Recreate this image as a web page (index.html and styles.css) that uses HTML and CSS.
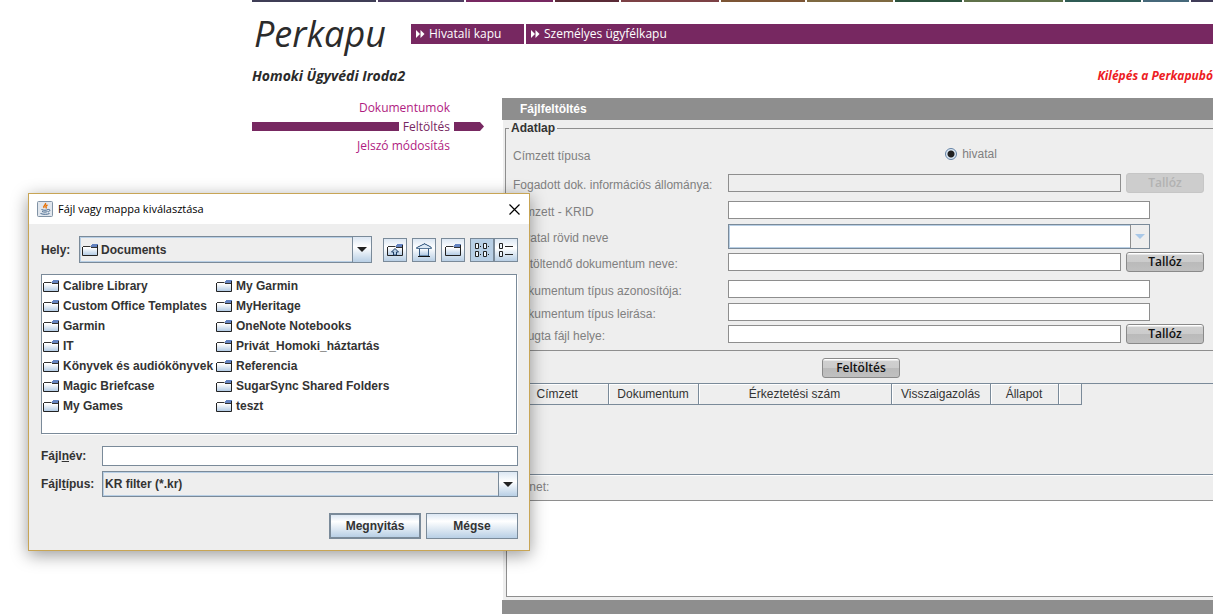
FILE: index.html
```
<!DOCTYPE html>
<html lang="hu">
<head>
    <meta charset="utf-8">
    <title>Perkapu</title>
    <link rel="stylesheet" href="styles.css">
</head>
<body>
<svg class="defs" width="0" height="0">
    <defs>
        <linearGradient id="paper" x1="0" y1="0" x2="0" y2="1">
            <stop offset="0.1" stop-color="#ffffff"/>
            <stop offset="1" stop-color="#a9c5e2"/>
        </linearGradient>
    </defs>
    <symbol id="folder" viewBox="0 0 16 14">
        <path d="M1 4h14v9h-14z" fill="url(#paper)"/>
        <path d="M0.500 4v8.500h15V1.500" fill="none" stroke="#222"/>
        <path d="M1 3.500h7.500M9 4.500h6" fill="none" stroke="#333"/>
        <path d="M10 1h6v1h-6zM9 2h6v2h-6z" fill="#6382bf"/>
    </symbol>
</svg>

<div class="page">
    <div class="strip">
        <i class="c1"></i><i class="c2"></i><i class="c3"></i><i class="c4"></i><i class="c5"></i><i class="c6"></i>
        <i class="c7"></i><i class="c8"></i><i class="c9"></i><i class="c10"></i><i class="c11"></i><i class="c12"></i>
    </div>

    <div class="header">
        <h1>Perkapu</h1>
        <div class="topnav">
            <a href="#"><svg width="9" height="8" viewBox="0 0 9 8"><path d="M0 0l4 4-4 4zM4.500 0l4 4-4 4z" fill="#fff"/></svg>Hivatali kapu</a>
            <a href="#" class="wide"><svg width="9" height="8" viewBox="0 0 9 8"><path d="M0 0l4 4-4 4zM4.500 0l4 4-4 4z" fill="#fff"/></svg>Személyes ügyfélkapu</a>
        </div>
    </div>

    <div class="userline">
        <span class="user">Homoki Ügyvédi Iroda2</span>
        <a href="#" class="logout">Kilépés a Perkapubó</a>
    </div>

    <div class="main">
        <div class="menu">
            <div class="item"><a href="#">Dokumentumok</a></div>
            <div class="item active">
                <span class="bar"></span>
                <a href="#">Feltöltés</a>
                <svg width="30" height="9" viewBox="0 0 30 9"><path d="M0 0h26l4 4.500-4 4.500H0z" fill="#772861"/></svg>
            </div>
            <div class="item"><a href="#">Jelszó módosítás</a></div>
        </div>

        <div class="content">
            <h2>Fájlfeltöltés</h2>
            <div class="applet">
                <fieldset>
                    <legend>Adatlap</legend>
                    <div class="form">
                        <span>Címzett típusa</span>
                        <label class="radio"><input type="radio" name="tipus" checked>hivatal</label>

                        <label for="info">Fogadott dok. információs állománya:</label>
                        <input type="text" id="info" class="short" disabled>
                        <button class="browse" disabled>Tallóz</button>

                        <label for="krid">Címzett - KRID</label>
                        <input type="text" id="krid" class="long">

                        <label for="hivatal">Hivatal rövid neve</label>
                        <div class="combo pale long">
                            <select id="hivatal"><option></option></select>
                            <span class="arrow"><svg width="10" height="5" viewBox="0 0 10 5"><path d="M0 0h10L5 5z" fill="#a9c8e8"/></svg></span>
                        </div>

                        <label for="doknev">Feltöltendő dokumentum neve:</label>
                        <input type="text" id="doknev" class="short">
                        <button class="browse">Tallóz</button>

                        <label for="azon">Dokumentum típus azonosítója:</label>
                        <input type="text" id="azon" class="long">

                        <label for="leiras">Dokumentum típus leirása:</label>
                        <input type="text" id="leiras" class="long">

                        <label for="nyugta">Nyugta fájl helye:</label>
                        <input type="text" id="nyugta" class="short">
                        <button class="browse">Tallóz</button>
                    </div>
                </fieldset>

                <div class="send"><button class="browse">Feltöltés</button></div>

                <div class="tablebox">
                    <table>
                        <tr>
                            <th class="w1">Címzett</th>
                            <th class="w2">Dokumentum</th>
                            <th class="w3">Érkeztetési szám</th>
                            <th class="w4">Visszaigazolás</th>
                            <th class="w5">Állapot</th>
                            <th class="w6"></th>
                        </tr>
                    </table>
                </div>

                <label class="msglabel" for="uzenet">Üzenet:</label>
                <textarea id="uzenet"></textarea>
            </div>
            <div class="foot"></div>
        </div>
    </div>
</div>

<!-- file chooser -->
<div class="dialog">
    <div class="titlebar">
        <svg width="16" height="16" viewBox="0 0 16 16">
            <rect x="0.500" y="0.500" width="15" height="15" rx="1" fill="#e0e6ed" stroke="#8193a5"/>
            <path d="M8.500 2c1 2-3 2.500-1.500 5M10.500 4c-2 1-2 1.500-1 3.500" fill="none" stroke="#e76f00" stroke-width="1.400"/>
            <path d="M4.500 8.500c2 1 5 1 6.500 0M5 10.500c2 .8 4 .8 5.500 0M3.500 12.500c3 1.200 7 1 9 0M11 8.500c3-.5 2 2 0 2.500" fill="none" stroke="#4a6b8f"/>
        </svg>
        <span class="caption">Fájl vagy mappa kiválasztása</span>
        <button class="close" aria-label="Bezárás"><svg width="11" height="11" viewBox="0 0 11 11"><path d="M0.500 0.500l10 10M10.500 0.500l-10 10" stroke="#000" stroke-width="1.200"/></svg></button>
    </div>

    <div class="lookin">
        <label for="hely">Hely:</label>
        <div class="combo">
            <svg class="icon" width="16" height="14"><use href="#folder"/></svg>
            <select id="hely"><option>Documents</option></select>
            <span class="arrow"><svg width="10" height="5" viewBox="0 0 10 5"><path d="M0 0h10L5 5z" fill="#222"/></svg></span>
        </div>
        <button class="tool" aria-label="Fel">
            <svg width="16" height="14" viewBox="0 0 16 14">
                <use href="#folder"/>
                <path d="M8 5.500l3.500 3.500h-2v3h-3V9h-2z" fill="#b8cfe5" stroke="#1f3f66"/>
            </svg>
        </button>
        <button class="tool" aria-label="Kezdőlap">
            <svg width="16" height="14" viewBox="0 0 16 14">
                <path d="M3.500 5v8h9V5" fill="url(#paper)" stroke="#33587f"/>
                <path d="M0.500 5.500v-1h1.500v-1h2v-1h2v-1h2v-1h1v1h2v1h2v1h1.500v1h1v1z" fill="#dce9f5" stroke="#33587f" stroke-width="0.800"/>
                <path d="M2 13.500h12" stroke="#111"/>
            </svg>
        </button>
        <button class="tool" aria-label="Új mappa"><svg width="16" height="14"><use href="#folder"/></svg></button>
        <div class="views">
            <button class="tool on" aria-label="Lista">
                <svg width="16" height="14" viewBox="0 0 16 14">
                    <path d="M1.500 0.500h3v5h-3zM9.500 0.500h3v5h-3zM1.500 8.500h3v5h-3zM9.500 8.500h3v5h-3z" fill="#eef5fc" stroke="#222"/>
                    <path d="M6 3.500h1M14 3.500h1M6 11.500h1M14 11.500h1" stroke="#222"/>
                </svg>
            </button>
            <button class="tool last" aria-label="Részletek">
                <svg width="16" height="14" viewBox="0 0 16 14">
                    <path d="M1.500 0.500h3v5h-3zM1.500 8.500h3v5h-3z" fill="#eef5fc" stroke="#222"/>
                    <path d="M7 3.500h8M7 11.500h8" stroke="#222"/>
                </svg>
            </button>
        </div>
    </div>

    <ul class="files">
        <li><svg width="16" height="14"><use href="#folder"/></svg>Calibre Library</li>
        <li><svg width="16" height="14"><use href="#folder"/></svg>Custom Office Templates</li>
        <li><svg width="16" height="14"><use href="#folder"/></svg>Garmin</li>
        <li><svg width="16" height="14"><use href="#folder"/></svg>IT</li>
        <li><svg width="16" height="14"><use href="#folder"/></svg>Könyvek és audiókönyvek</li>
        <li><svg width="16" height="14"><use href="#folder"/></svg>Magic Briefcase</li>
        <li><svg width="16" height="14"><use href="#folder"/></svg>My Games</li>
        <li><svg width="16" height="14"><use href="#folder"/></svg>My Garmin</li>
        <li><svg width="16" height="14"><use href="#folder"/></svg>MyHeritage</li>
        <li><svg width="16" height="14"><use href="#folder"/></svg>OneNote Notebooks</li>
        <li><svg width="16" height="14"><use href="#folder"/></svg>Privát_Homoki_háztartás</li>
        <li><svg width="16" height="14"><use href="#folder"/></svg>Referencia</li>
        <li><svg width="16" height="14"><use href="#folder"/></svg>SugarSync Shared Folders</li>
        <li><svg width="16" height="14"><use href="#folder"/></svg>teszt</li>
    </ul>

    <div class="filerow">
        <label for="fajlnev">Fájl<u>n</u>év:</label>
        <input type="text" id="fajlnev">
    </div>
    <div class="filerow">
        <label for="fajltipus">Fájl<u>t</u>ípus:</label>
        <div class="combo">
            <select id="fajltipus"><option>KR filter (*.kr)</option></select>
            <span class="arrow"><svg width="10" height="5" viewBox="0 0 10 5"><path d="M0 0h10L5 5z" fill="#222"/></svg></span>
        </div>
    </div>
    <div class="actions">
        <button class="default">Megnyitás</button>
        <button>Mégse</button>
    </div>
</div>
</body>
</html>
```
FILE: styles.css
```
* {
    box-sizing: border-box;
}
body {
    margin: 0;
    background: #fff;
    font-family: "Liberation Sans", Arial, sans-serif;
    font-size: 12px;
    overflow: hidden;
}
svg {
    flex: none;
    display: block;
}
.defs {
    position: absolute;
}
a {
    text-decoration: none;
}
input, select, button, textarea {
    font: inherit;
    margin: 0;
    padding: 0;
}
/* the site is wider than the window on the right */
.page {
    margin-left: 252px;
    margin-right: -20px;
}

.strip {
    display: flex;
    gap: 2px;
    height: 2px;
}
.strip i { flex: none; }
.c1 { width: 124px; background: #3f3e56; }
.c2 { width: 86px; background: #4e3f62; }
.c3 { width: 87px; background: #772861; }
.c4 { width: 64px; background: #5a2a36; }
.c5 { width: 98px; background: #7c4145; }
.c6 { width: 84px; background: #7c5535; }
.c7 { width: 86px; background: #7e6941; }
.c8 { width: 67px; background: #2b523e; }
.c9 { width: 99px; background: #5f714a; }
.c10 { width: 76px; background: #2f5b55; }
.c11 { width: 46px; background: #46687a; }
.c12 { width: 60px; background: #403c58; }

.header {
    display: flex;
    padding-top: 8px;
    height: 60px;
}
h1 {
    width: 159px;
    margin: 0;
    padding-left: 2px;
    font: italic 36px/48px "Open Sans", sans-serif;
    color: #2b2b2b;
}
.topnav {
    display: flex;
    flex: 1;
    gap: 2px;
    padding-top: 14px;
}
.topnav a {
    display: flex;
    align-items: center;
    gap: 4px;
    width: 113px;
    height: 20px;
    padding-left: 5px;
    background: #772861;
    color: #fff;
    font: 12px/20px "Open Sans", sans-serif;
}
.topnav .wide {
    flex: 1;
}
.userline {
    display: flex;
    justify-content: space-between;
    height: 36px;
    padding: 4px 20px 0 0;
    font: italic bold 14px/20px "Open Sans", sans-serif;
    color: #2b2b2b;
}
.logout {
    color: #ed1c24;
    font-size: 12px;
}

.main {
    display: flex;
}
.menu {
    width: 250px;
    font: 12px/19px "Open Sans", sans-serif;
}
.item {
    display: flex;
    align-items: center;
    justify-content: flex-end;
    padding-right: 52px;
    height: 19px;
}
.item a {
    color: #b01b81;
}
.item.active {
    gap: 4px;
    padding-right: 18px;
}
.item.active a {
    color: #772861;
}
.bar {
    flex: 1;
    height: 9px;
    background: #772861;
}

.content {
    flex: 1;
}
h2 {
    margin: 0;
    padding-left: 18px;
    background: #8e8e8e;
    color: #fff;
    font-size: 12px;
    line-height: 22px;
}
.applet {
    padding: 1px 0 3px 3px;
    margin-left: 1px;
    background: #eee;
}
fieldset {
    margin: 0 0 0 -1px;
    padding: 3px 28px 4px 7px;
    border: 1px solid #8e8e8e;
    min-width: 0;
}
legend {
    padding: 0 2px;
    margin-left: -4px;
    font-weight: bold;
    line-height: 14px;
    color: #333;
}
.form {
    display: grid;
    grid-template-columns: 215px 1fr 5px 24px 54px;
    grid-template-rows: 32px 26px 28px 24px 28px 26px 20px 24px;
    align-items: center;
    color: #808080;
}
.form > label, .form > span {
    grid-column: 1;
    padding-top: 4px;
}
.form > .radio {
    grid-column: 2 / -1;
    justify-self: center;
    display: flex;
    align-items: center;
    gap: 5px;
    padding: 0 0 0 10px;
}
.radio input {
    appearance: none;
    width: 12px;
    height: 12px;
    border: 1px solid #6382a5;
    border-radius: 50%;
    background: radial-gradient(circle, #222 3px, #dce8f4 4px);
}
.form input[type=text] {
    height: 18px;
    border: 1px solid #8e8e8e;
    background: #fff;
}
.form input[type=text]:disabled {
    background: #eee;
}
.form .short {
    grid-column: 2;
}
.form .long {
    grid-column: 2 / 5;
}
.form .browse {
    grid-column: 4 / 6;
}
.browse {
    width: 78px;
    height: 20px;
    border: 1px solid #8a8a8a;
    border-radius: 3px;
    background: linear-gradient(#fff 1px, #cfcfcf 2px, #cccccc 50%, #bababa 51%, #c0c0c0);
    color: #111;
    font: 600 12px/16px "Open Sans", sans-serif;
}
.browse:disabled {
    border-color: #c6c6c6;
    background: #cdcdcd;
    color: #b2b2b2;
}

.combo {
    display: flex;
    align-items: center;
    height: 26px;
    border: 1px solid #7a8a99;
    box-shadow: inset 0 0 0 1px #b8cfe5;
    background: #eee;
}
.combo .icon {
    margin-left: 2px;
}
.combo select {
    flex: 1;
    align-self: stretch;
    min-width: 0;
    padding-left: 3px;
    border: 0;
    appearance: none;
    background: transparent;
    color: #333;
}
.arrow {
    display: flex;
    align-items: center;
    justify-content: center;
    align-self: stretch;
    width: 19px;
    border-left: 1px solid #7a8a99;
    background: linear-gradient(#dce7f3, #fff 40%, #b8cfe5);
}
.combo.pale {
    height: 25px;
    background: #fff;
}
.pale .arrow {
    border-color: #8e8e8e;
    background: #eee;
}

.send {
    display: flex;
    justify-content: center;
    height: 32px;
    padding: 7px 17px 0 0;
}
.tablebox {
    height: 92px;
    border: 1px solid #7a8a99;
    border-right: 0;
    box-shadow: 0 1px #fff;
}
table {
    border-collapse: collapse;
    table-layout: fixed;
    width: 574px;
}
th {
    height: 20px;
    padding: 0;
    border-right: 1px solid #7a8a99;
    border-bottom: 1px solid #7a8a99;
    box-shadow: inset 1px 1px #fff;
    font-weight: normal;
    color: #333;
}
.w1 { width: 101px; }
.w2 { width: 90px; }
.w3 { width: 193px; }
.w4 { width: 99px; }
.w5 { width: 68px; }
.w6 { width: 23px; }
.msglabel {
    display: block;
    padding: 0 2px 1px;
    line-height: 24px;
    color: #808080;
}
textarea {
    display: block;
    width: 100%;
    height: 97px;
    border: 1px solid #8e8e8e;
    background: #fff;
    resize: none;
}
.foot {
    height: 30px;
    background: #8e8e8e;
}

.dialog {
    position: absolute;
    left: 28px;
    top: 193px;
    width: 502px;
    padding-bottom: 11px;
    border: 1px solid #c8a555;
    background: #eee;
    box-shadow: 0 4px 16px rgba(0, 0, 0, 0.4);
    color: #333;
    font-weight: bold;
}
.titlebar {
    display: flex;
    align-items: center;
    gap: 5px;
    height: 30px;
    padding: 0 9px 0 8px;
    background: #fff;
    color: #000;
    font: 11px/16px "Open Sans", sans-serif;
}
.caption {
    flex: 1;
}
.close {
    border: 0;
    background: none;
}
.lookin {
    display: flex;
    align-items: center;
    gap: 5px;
    padding: 12px 11px 0 12px;
}
.lookin label {
    width: 33px;
}
.lookin .combo {
    flex: 1;
    height: 27px;
    margin-right: 6px;
}
.tool {
    display: flex;
    align-items: center;
    justify-content: center;
    width: 24px;
    height: 24px;
    border: 1px solid #7a8a99;
    background: linear-gradient(#dce7f3, #fff 40%, #b8cfe5);
}
.tool.on {
    background: #b8cfe5;
}
.views {
    display: flex;
}
.files {
    display: grid;
    grid-auto-flow: column;
    grid-template-rows: repeat(7, 20px);
    grid-template-columns: 173px 1fr;
    height: 160px;
    margin: 11px 12px 12px;
    padding: 1px;
    border: 1px solid #7a8a99;
    background: #fff;
    box-shadow: 1px 1px #fff;
    list-style: none;
}
.files li {
    display: flex;
    align-items: center;
    gap: 4px;
    white-space: nowrap;
}
.filerow {
    display: flex;
    align-items: center;
    padding: 0 11px 0 12px;
    margin-bottom: 5px;
}
.filerow label {
    width: 61px;
}
.filerow input, .filerow .combo {
    flex: 1;
}
.filerow input {
    height: 20px;
    border: 1px solid #7a8a99;
    background: #fff;
}
.filerow select {
    padding-left: 2px;
}
.actions {
    display: flex;
    justify-content: flex-end;
    gap: 5px;
    padding: 11px 11px 0;
}
.actions button {
    width: 92px;
    height: 26px;
    border: 1px solid #7a8a99;
    background: linear-gradient(#dce7f3, #fff 30%, #b8cfe5);
    color: #333;
}
.actions .default {
    border-width: 2px;
}
```
